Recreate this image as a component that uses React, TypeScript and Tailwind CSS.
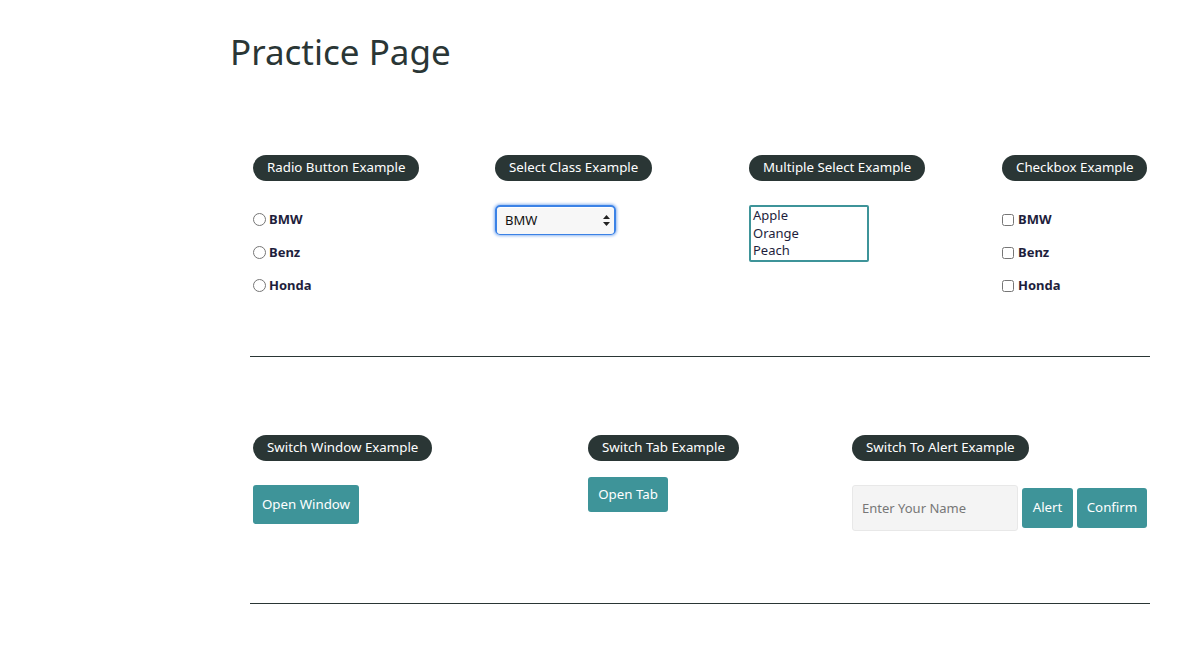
import React from "react";

const font = { fontFamily: '"Noto Sans", "DejaVu Sans", sans-serif' };

const Legend = ({ children }: { children: React.ReactNode }) => (
  <div className="flex h-[26px] w-fit items-center whitespace-nowrap rounded-full bg-[#2a3635] px-[14px] text-[13.3px] leading-none text-white">
    {children}
  </div>
);

const cars = ["BMW", "Benz", "Honda"];

export default function App() {
  return (
    <div className="min-h-[654px] bg-white text-[#1e1e3c]" style={font}>
      <h1 className="pl-[230px] pt-[28px] text-[35px] leading-[48px] text-[#2a3635]">
        Practice Page
      </h1>

      <div className="ml-[250px] w-[900px]">
        {/* first row */}
        <div className="flex pt-[79px]">
          <div className="w-[245px] pl-[3px]">
            <Legend>Radio Button Example</Legend>
            <div className="mt-[29px] flex flex-col gap-[14px]">
              {cars.map((c) => (
                <label key={c} className="flex h-[19px] items-center text-[13px] font-bold">
                  <input type="radio" name="car" className="m-0 mr-[3px] h-[13px] w-[13px]" />
                  {c}
                </label>
              ))}
            </div>
          </div>

          <div className="w-[254px]">
            <Legend>Select Class Example</Legend>
            <div className="mt-[24px]">
              <div className="relative h-[30px] w-[121px] rounded-[5px] border-2 border-[#3b82e6] shadow-[0_0_3px_1px_#8fb6f0]">
                <select className="h-full w-full appearance-none rounded-[3px] bg-[#f7f7f7] pl-[8px] text-[13px] text-[#111] outline-none">
                  <option>BMW</option>
                  <option>Benz</option>
                  <option>Honda</option>
                </select>
                <svg className="pointer-events-none absolute right-[4px] top-[8px]" width="7" height="11" viewBox="0 0 7 11">
                  <path d="M3.5 0 L7 4 H0 Z M3.5 11 L7 7 H0 Z" fill="#222" />
                </svg>
              </div>
            </div>
          </div>

          <div className="w-[253px]">
            <Legend>Multiple Select Example</Legend>
            <div className="mt-[24px]">
              <div className="flex h-[57px] w-[120px] flex-col rounded-[2px] border-2 border-[#3e9499] px-[2px] text-[13px] leading-[17.5px] text-[#1e1e3c]">
                <span>Apple</span>
                <span>Orange</span>
                <span>Peach</span>
              </div>
            </div>
          </div>

          <div className="flex-1">
            <Legend>Checkbox Example</Legend>
            <div className="mt-[29px] flex flex-col gap-[14px]">
              {cars.map((c) => (
                <label key={c} className="flex h-[19px] items-center text-[13px] font-bold">
                  <input type="checkbox" className="m-0 mr-[4px] h-[12px] w-[12px]" />
                  {c}
                </label>
              ))}
            </div>
          </div>
        </div>

        <hr className="mt-[61px] border-t border-[#2a3635]" />

        {/* second row */}
        <div className="flex pt-[78px]">
          <div className="w-[338px] pl-[3px]">
            <Legend>Switch Window Example</Legend>
            <button className="mt-[24px] block h-[39px] w-[106px] rounded-[3px] bg-[#3e9499] text-[13.3px] text-white">
              Open Window
            </button>
          </div>

          <div className="w-[264px]">
            <Legend>Switch Tab Example</Legend>
            <button className="mt-[16px] block h-[35px] w-[80px] rounded-[3px] bg-[#3e9499] text-[13.3px] text-white">
              Open Tab
            </button>
          </div>

          <div className="flex-1">
            <Legend>Switch To Alert Example</Legend>
            <div className="mt-[24px] flex items-center">
              <input
                placeholder="Enter Your Name"
                className="h-[46px] w-[166px] rounded-[3px] border border-[#e8e8e8] bg-[#f4f4f4] px-[9px] text-[13px] text-[#555] outline-none placeholder:text-[#777]"
              />
              <button className="ml-[4px] h-[40px] w-[51px] rounded-[3px] bg-[#3e9499] text-[13.3px] text-white">
                Alert
              </button>
              <button className="ml-[4px] h-[40px] w-[70px] rounded-[3px] bg-[#3e9499] text-[13.3px] text-white">
                Confirm
              </button>
            </div>
          </div>
        </div>

        <hr className="mt-[72px] border-t border-[#2a3635]" />
      </div>
    </div>
  );
}
